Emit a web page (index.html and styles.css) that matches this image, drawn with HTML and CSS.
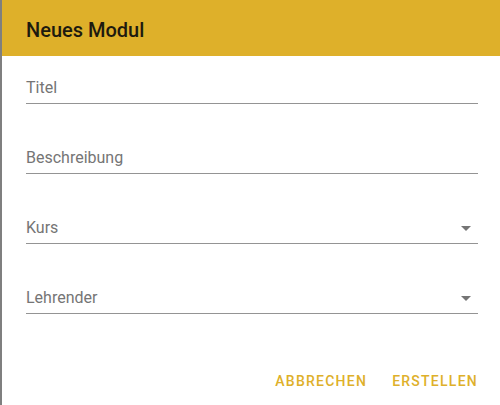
FILE: index.html
```html
<!DOCTYPE html>
<html lang="de">
<head>
<meta charset="utf-8">
<title>Neues Modul</title>
<link rel="stylesheet" href="styles.css">
</head>
<body>
<div class="page">
  <div class="backdrop"></div>
  <div class="dialog">
    <div class="dialog-header">
      <h2 class="dialog-title">Neues Modul</h2>
    </div>
    <div class="dialog-content">
      <div class="field"><span class="label">Titel</span></div>
      <div class="field"><span class="label">Beschreibung</span></div>
      <div class="field select"><span class="label">Kurs</span><span class="arrow"></span></div>
      <div class="field select"><span class="label">Lehrender</span><span class="arrow"></span></div>
    </div>
    <div class="dialog-actions">
      <button class="btn">Abbrechen</button>
      <button class="btn">Erstellen</button>
    </div>
  </div>
</div>
</body>
</html>
```
FILE: styles.css
```css
html, body {
  margin: 0;
  padding: 0;
  height: 100%;
}
body {
  font-family: Roboto, "Liberation Sans", sans-serif;
  background: #fff;
}
.page {
  display: flex;
  height: 405px;
  width: 500px;
}
.backdrop {
  width: 2px;
  flex: none;
  background: #7f7f7f;
}
.dialog {
  flex: 1;
  display: flex;
  flex-direction: column;
  background: #fff;
}
.dialog-header {
  height: 56px;
  background: #deb02a;
  display: flex;
  align-items: center;
  padding-left: 24px;
  box-sizing: border-box;
}
.dialog-title {
  margin: 0;
  font-size: 20px;
  font-weight: 500;
  color: #1d1a0f;
  line-height: 24px;
  padding-top: 4px;
}
.dialog-content {
  padding: 20px 22px 0 24px;
  display: flex;
  flex-direction: column;
  gap: 42px;
}
.field {
  display: flex;
  align-items: center;
  height: 24px;
  padding-bottom: 3px;
  border-bottom: 1px solid #949494;
}
.label {
  flex: 1;
  font-size: 16px;
  line-height: 24px;
  color: #757575;
}
.arrow {
  width: 0;
  height: 0;
  border-left: 5px solid transparent;
  border-right: 5px solid transparent;
  border-top: 5px solid #757575;
  margin-right: 7px;
  margin-top: 1px;
}
.dialog-actions {
  display: flex;
  justify-content: flex-end;
  gap: 9px;
  padding: 49px 14px 0 0;
}
.btn {
  font-family: Roboto, "Liberation Sans", sans-serif;
  background: none;
  border: none;
  height: 36px;
  padding: 0 8px;
  font-size: 14px;
  font-weight: 500;
  letter-spacing: 1.25px;
  text-transform: uppercase;
  color: #deb02a;
}
```
